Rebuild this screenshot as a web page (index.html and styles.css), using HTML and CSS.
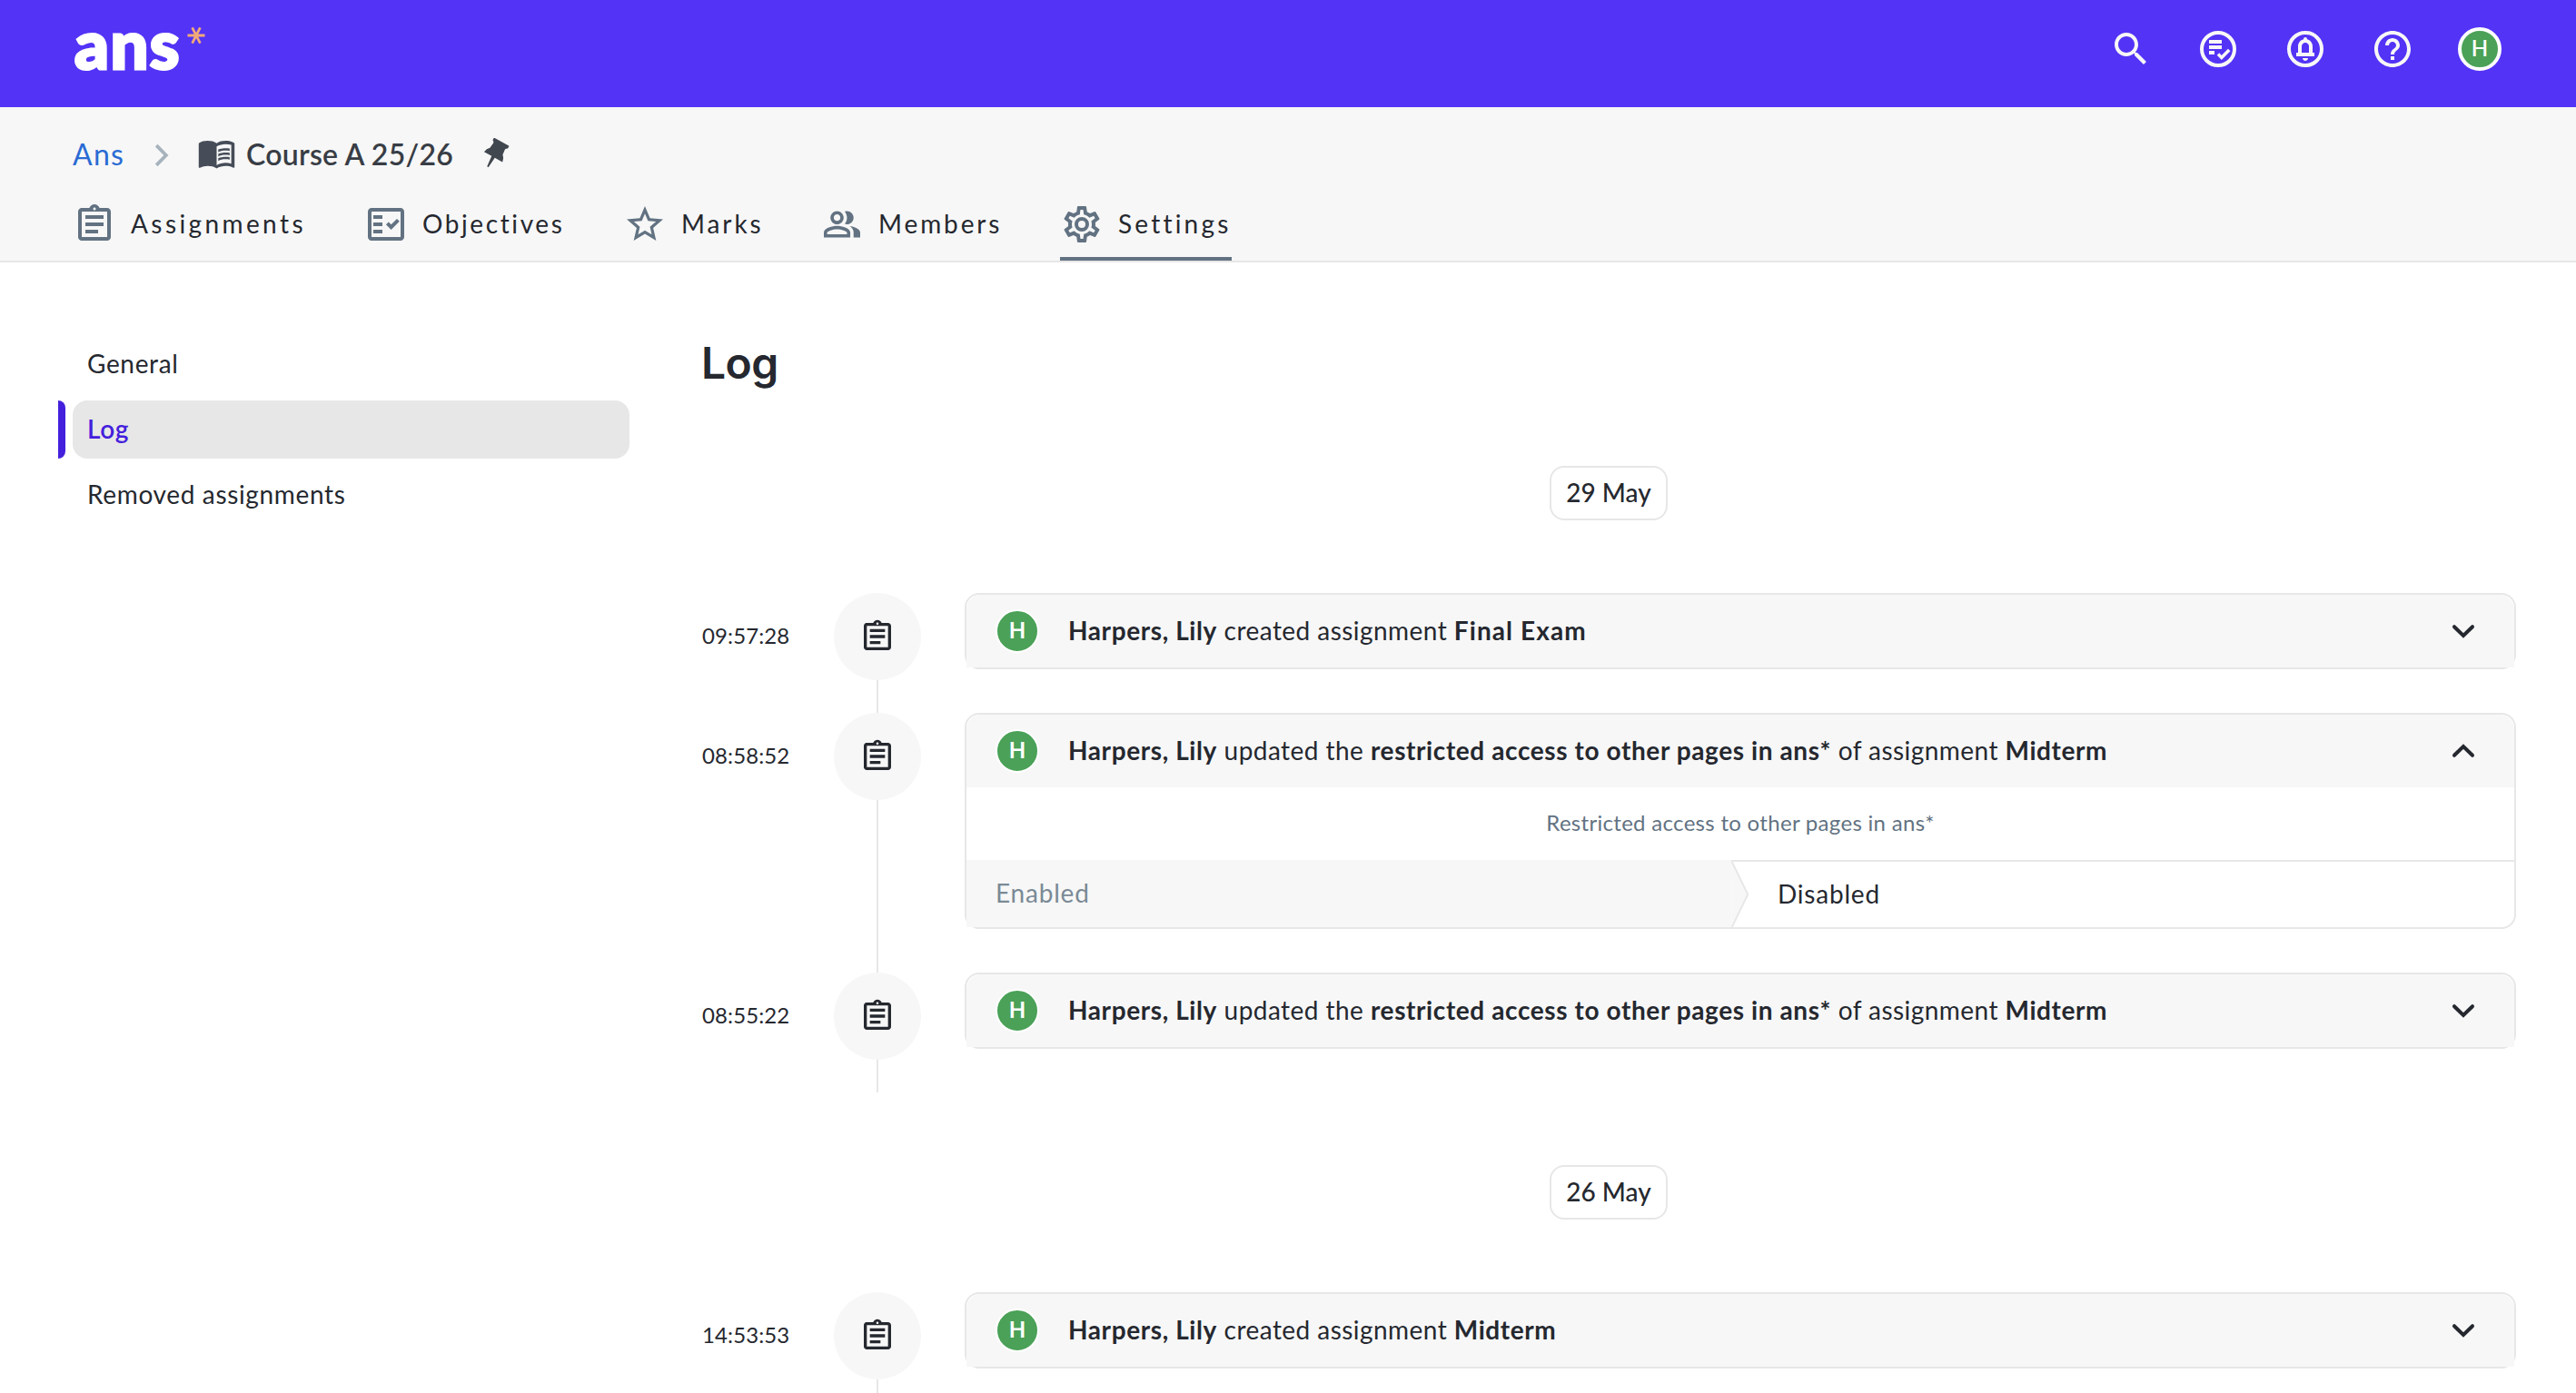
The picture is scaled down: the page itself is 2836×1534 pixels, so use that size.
FILE: index.html
```
<!DOCTYPE html>
<html lang="en">
  <head>
    <meta charset="UTF-8" />
    <meta name="viewport" content="width=device-width, initial-scale=1.0" />
    <title>Log - Course A 25/26</title>
    <link rel="stylesheet" href="styles.css">
  </head>
  <body>
    <svg class="sprite" xmlns="http://www.w3.org/2000/svg">
      <symbol id="i-clipboard" viewBox="0 0 24 24">
        <path d="M7 15h7v2H7zm0-4h10v2H7zm0-4h10v2H7zm12-4h-4.18C14.4 1.84 13.3 1 12 1c-1.3 0-2.4.84-2.82 2H5c-.14 0-.27.01-.4.04-.39.08-.74.28-1.01.55-.18.18-.33.4-.43.64-.1.23-.16.49-.16.77v14c0 .27.06.54.16.78s.25.45.43.64c.27.27.62.47 1.01.55.13.02.26.03.4.03h14c1.1 0 2-.9 2-2V5c0-1.1-.9-2-2-2zm-7-.25c.41 0 .75.34.75.75s-.34.75-.75.75-.75-.34-.75-.75.34-.75.75-.75zM19 19H5V5h14v14z" />
      </symbol>
      <symbol id="i-chevron" viewBox="0 0 24 24">
        <path d="M7 9.6l5 4.9 5-4.9" fill="none" stroke="currentColor" stroke-width="2" stroke-linecap="round" />
      </symbol>
    </svg>

    <header class="topbar">
      <a class="logo" href="#">
        <span class="logo-text">ans</span>
        <svg class="logo-star" viewBox="0 0 20 20"><path d="M.5 10h19M5.6 1.4l8.8 17.2M14.4 1.4L5.6 18.6" /></svg>
      </a>
      <nav class="topbar-actions">
        <svg class="icon" viewBox="0 0 24 24"><path d="M15.5 14h-.79l-.28-.27C15.41 12.59 16 11.11 16 9.5 16 5.91 13.09 3 9.5 3S3 5.91 3 9.5 5.91 16 9.5 16c1.61 0 3.09-.59 4.23-1.57l.27.28v.79l5 4.99L20.49 19l-4.99-5zm-6 0C7.01 14 5 11.99 5 9.5S7.01 5 9.5 5 14 7.01 14 9.5 11.99 14 9.5 14z" /></svg>
        <svg class="icon" viewBox="0 0 24 24"><circle cx="12" cy="12" r="9" fill="none" stroke="currentColor" stroke-width="2" /><path d="M7 7h7v2H7zM7 10h7v2H7zM7 13h3v2H7z" /><path d="M12 14.8l1.9 1.9 4.2-4.2" fill="none" stroke="currentColor" stroke-width="1.8" /></svg>
        <svg class="icon" viewBox="0 0 24 24"><circle cx="12" cy="12" r="9" fill="none" stroke="currentColor" stroke-width="2" /><path fill-rule="evenodd" d="M7 16v-2h1v-3.5c0-1.86 1.28-3.41 3-3.86V6.5a1 1 0 0 1 2 0v.14c1.72.45 3 2 3 3.86V14h1v2zM10 14h4v-3.5c0-1.1-.9-2-2-2s-2 .9-2 2zM10.5 17h3c0 .83-.67 1.5-1.5 1.5s-1.5-.67-1.5-1.5z" /></svg>
        <svg class="icon" viewBox="0 0 24 24"><path d="M11 18h2v-2h-2v2zm1-16C6.48 2 2 6.48 2 12s4.48 10 10 10 10-4.48 10-10S17.52 2 12 2zm0 18c-4.41 0-8-3.59-8-8s3.59-8 8-8 8 3.59 8 8-3.59 8-8 8zm0-14c-2.21 0-4 1.79-4 4h2c0-1.1.9-2 2-2s2 .9 2 2c0 2-3 1.75-3 5h2c0-2.25 3-2.5 3-5 0-2.21-1.79-4-4-4z" /></svg>
        <span class="avatar avatar-top">H</span>
      </nav>
    </header>

    <div class="subheader">
      <div class="breadcrumb">
        <a class="crumb-link" href="#">Ans</a>
        <svg class="crumb-sep" viewBox="0 0 16 26"><path d="M2.2 2.2L12.8 13 2.2 23.8" /></svg>
        <svg class="crumb-book" viewBox="0 0 24 24"><path d="M17.5 4.5c-1.95 0-4.05.4-5.5 1.5-1.45-1.1-3.55-1.5-5.5-1.5S2.45 4.9 1 6v14.65c0 .65.73.45.75.45C3.1 20.45 5.05 20 6.5 20c1.95 0 4.05.4 5.5 1.5 1.35-.85 3.8-1.5 5.5-1.5 1.65 0 3.35.3 4.75 1.05.41.21.75-.19.75-.45V6c-1.49-1.12-3.59-1.5-5.5-1.5zm3.5 14c-1.1-.35-2.3-.5-3.5-.5-1.7 0-4.15.65-5.5 1.5V8c1.35-.85 3.8-1.5 5.5-1.5 1.2 0 2.4.15 3.5.5v11.5z" /><path d="M17.5 10.5c.88 0 1.73.09 2.5.26V9.24c-.79-.15-1.64-.24-2.5-.24-1.7 0-3.24.29-4.5.83v1.66c1.13-.64 2.7-.99 4.5-.99zM13 12.49v1.66c1.13-.64 2.7-.99 4.5-.99.88 0 1.73.09 2.5.26V11.9c-.79-.15-1.64-.24-2.5-.24-1.7 0-3.24.3-4.5.83zM17.5 14.33c-1.7 0-3.24.29-4.5.83v1.66c1.13-.64 2.7-.99 4.5-.99.88 0 1.73.09 2.5.26v-1.52c-.79-.16-1.64-.24-2.5-.24z" /></svg>
        <span class="crumb-current">Course A 25/26</span>
        <svg class="crumb-pin" viewBox="0 0 32 36"><path transform="translate(21.500 5.500) rotate(29)" d="M-9.500-1.500h19V1.500Q7.500 2.500 7.300 4l.7 6.500Q11 13 11.500 17.500H2L.8 30h-1.600L-2 17.500h-9.500Q-11 13-8 10.500L-7.300 4Q-7.500 2.500-9.500 1.500z" /></svg>
      </div>
      <nav class="tabs">
        <a class="tab tab-assignments" href="#">
          <svg class="icon"><use href="#i-clipboard" /></svg>
          <span>Assignments</span>
        </a>
        <a class="tab tab-objectives" href="#">
          <svg class="icon" viewBox="0 0 24 24"><path d="M20 3H4c-1.1 0-2 .9-2 2v14c0 1.1.9 2 2 2h16c1.1 0 2-.9 2-2V5c0-1.1-.9-2-2-2zm0 16H4V5h16v14z" /><path d="M19.41 10.42L17.99 9l-3.17 3.17-1.41-1.42L12 12.16 14.82 15zM5 7h5v2H5zM5 11h5v2H5zM5 15h5v2H5z" /></svg>
          <span>Objectives</span>
        </a>
        <a class="tab" href="#">
          <svg class="icon" viewBox="0 0 24 24"><path d="M22 9.24l-7.19-.62L12 2 9.19 8.63 2 9.24l5.46 4.73L5.82 21 12 17.27 18.18 21l-1.63-7.03L22 9.24zM12 15.4l-3.76 2.27 1-4.28-3.32-2.88 4.38-.38L12 6.1l1.71 4.04 4.38.38-3.32 2.88 1 4.28L12 15.4z" /></svg>
          <span>Marks</span>
        </a>
        <a class="tab" href="#">
          <svg class="icon" viewBox="-1.2 -1.2 26.4 26.4"><path d="M16.67 13.13C18.04 14.06 19 15.32 19 17v3h4v-3c0-2.18-3.57-3.47-6.33-3.87zM15 12c2.21 0 4-1.79 4-4s-1.79-4-4-4c-.47 0-.91.1-1.33.24C14.5 5.27 15 6.58 15 8s-.5 2.73-1.33 3.76c.42.14.86.24 1.33.24zM9 12c2.21 0 4-1.79 4-4s-1.79-4-4-4-4 1.79-4 4 1.79 4 4 4zm0-6c1.1 0 2 .9 2 2s-.9 2-2 2-2-.9-2-2 .9-2 2-2zM9 13c-2.67 0-8 1.34-8 4v3h16v-3c0-2.66-5.33-4-8-4zm6 5H3v-.99C3.2 16.29 6.3 15 9 15s5.8 1.29 6 2v1z" /></svg>
          <span>Members</span>
        </a>
        <a class="tab tab-settings active" href="#">
          <svg class="icon" viewBox="0 0 24 24"><path d="M12,8A4,4 0 0,1 16,12A4,4 0 0,1 12,16A4,4 0 0,1 8,12A4,4 0 0,1 12,8M12,10A2,2 0 0,0 10,12A2,2 0 0,0 12,14A2,2 0 0,0 14,12A2,2 0 0,0 12,10M10,22C9.75,22 9.54,21.82 9.5,21.58L9.13,18.93C8.5,18.68 7.96,18.34 7.44,17.94L4.95,18.95C4.73,19.03 4.46,18.95 4.34,18.73L2.34,15.27C2.21,15.05 2.27,14.78 2.46,14.63L4.57,12.97L4.5,12L4.57,11L2.46,9.37C2.27,9.22 2.21,8.95 2.34,8.73L4.34,5.27C4.46,5.05 4.73,4.96 4.95,5.05L7.44,6.05C7.96,5.66 8.5,5.32 9.13,5.07L9.5,2.42C9.54,2.18 9.75,2 10,2H14C14.25,2 14.46,2.18 14.5,2.42L14.87,5.07C15.5,5.32 16.04,5.66 16.56,6.05L19.05,5.05C19.27,4.96 19.54,5.05 19.66,5.27L21.66,8.73C21.79,8.95 21.73,9.22 21.54,9.37L19.43,11L19.5,12L19.43,13L21.54,14.63C21.73,14.78 21.79,15.05 21.66,15.27L19.66,18.73C19.54,18.95 19.27,19.04 19.05,18.95L16.56,17.95C16.04,18.34 15.5,18.68 14.87,18.93L14.5,21.58C14.46,21.82 14.25,22 14,22H10M11.25,4L10.88,6.61C9.68,6.86 8.62,7.5 7.85,8.39L5.44,7.35L4.69,8.65L6.8,10.2C6.4,11.37 6.4,12.64 6.8,13.8L4.68,15.36L5.43,16.66L7.86,15.62C8.63,16.5 9.68,17.14 10.87,17.38L11.24,20H12.76L13.13,17.39C14.32,17.14 15.37,16.5 16.14,15.62L18.57,16.66L19.32,15.36L17.2,13.81C17.6,12.64 17.6,11.37 17.2,10.2L19.31,8.65L18.56,7.35L16.15,8.39C15.38,7.5 14.32,6.86 13.12,6.62L12.75,4H11.25Z" /></svg>
          <span>Settings</span>
        </a>
      </nav>
    </div>

    <div class="page">
      <aside class="sidebar">
        <a class="side-link" href="#">General</a>
        <a class="side-link active" href="#">Log</a>
        <a class="side-link" href="#">Removed assignments</a>
      </aside>

      <main class="content">
        <h1>Log</h1>

        <div class="date-row"><span class="date">29 May</span></div>

        <div class="entry">
          <time class="time">09:57:28</time>
          <div class="rail">
            <span class="rail-dot"><svg><use href="#i-clipboard" /></svg></span>
          </div>
          <div class="card">
            <div class="card-head">
              <span class="avatar">H</span>
              <p class="card-text"><b>Harpers, Lily</b> created assignment <b class="wide">Final Exam</b></p>
              <svg class="icon"><use href="#i-chevron" /></svg>
            </div>
          </div>
        </div>

        <div class="entry">
          <time class="time">08:58:52</time>
          <div class="rail">
            <span class="rail-dot"><svg><use href="#i-clipboard" /></svg></span>
          </div>
          <div class="card">
            <div class="card-head">
              <span class="avatar">H</span>
              <p class="card-text"><b>Harpers, Lily</b> updated the <b>restricted access to other pages in ans*</b> of assignment <b>Midterm</b></p>
              <svg class="icon up"><use href="#i-chevron" /></svg>
            </div>
            <div class="change-title">Restricted access to other pages in ans*</div>
            <div class="change">
              <div class="change-old">Enabled</div>
              <svg class="change-arrow" viewBox="0 0 20 74"><path class="arrow-fill" d="M0 0l18.5 37L0 74z" /><path class="arrow-line" d="M.5 0l18 37-18 37" /></svg>
              <div class="change-new">Disabled</div>
            </div>
          </div>
        </div>

        <div class="entry">
          <time class="time">08:55:22</time>
          <div class="rail">
            <span class="rail-dot"><svg><use href="#i-clipboard" /></svg></span>
          </div>
          <div class="card">
            <div class="card-head">
              <span class="avatar">H</span>
              <p class="card-text"><b>Harpers, Lily</b> updated the <b>restricted access to other pages in ans*</b> of assignment <b>Midterm</b></p>
              <svg class="icon"><use href="#i-chevron" /></svg>
            </div>
          </div>
        </div>

        <div class="date-row"><span class="date">26 May</span></div>

        <div class="entry">
          <time class="time">14:53:53</time>
          <div class="rail">
            <span class="rail-dot"><svg><use href="#i-clipboard" /></svg></span>
          </div>
          <div class="card">
            <div class="card-head">
              <span class="avatar">H</span>
              <p class="card-text"><b>Harpers, Lily</b> created assignment <b>Midterm</b></p>
              <svg class="icon"><use href="#i-chevron" /></svg>
            </div>
          </div>
        </div>
      </main>
    </div>
  </body>
</html>
```
FILE: styles.css
```
* {
  box-sizing: border-box;
}

body {
  margin: 0;
  font-family: Lato, sans-serif;
  font-size: 28px;
  letter-spacing: 0.45px;
  color: #25282f;
  background: #fff;
}

a {
  color: inherit;
  text-decoration: none;
}

svg {
  display: block;
  fill: currentColor;
  flex: none;
}

.sprite {
  display: none;
}

.icon {
  width: 48px;
  height: 48px;
}

.avatar {
  display: flex;
  align-items: center;
  justify-content: center;
  flex: none;
  width: 48px;
  height: 48px;
  border: 2px solid #fff;
  border-radius: 50%;
  background: #4aa157;
  color: #fff;
  font-size: 24px;
  line-height: 40px;
  padding-bottom: 2px;
  font-weight: 700;
  letter-spacing: 0;
}

/* top bar */
.topbar {
  display: flex;
  align-items: center;
  justify-content: space-between;
  height: 118px;
  padding: 0 82px 10px 80px;
  background: #5333f6;
}

.logo {
  display: flex;
  padding-left: 2px;
  color: #fff;
}

.logo-text {
  height: 80px;
  font-size: 74px;
  line-height: 67px;
  font-weight: 900;
  letter-spacing: 1.5px;
  -webkit-text-stroke: 3px #fff;
}

.logo-star {
  width: 20px;
  height: 20px;
  margin: 15px 0 0 7px;
  fill: none;
  stroke: #f2a978;
  stroke-width: 2.8;
}

.topbar-actions {
  display: flex;
  align-items: center;
  gap: 48px;
  color: #f7f7f7;
}

.avatar-top {
  border-width: 4px;
  font-weight: 600;
}

/* breadcrumb + tabs */
.subheader {
  padding: 0 80px;
  background: #f7f7f7;
  border-bottom: 2px solid #e7e7e7;
}

.breadcrumb {
  display: flex;
  align-items: center;
  height: 105px;
  padding-bottom: 2px;
  font-size: 32px;
}

.crumb-link {
  width: 90px;
  color: #2a6bd4;
  letter-spacing: 1.3px;
}

.crumb-sep {
  width: 16px;
  height: 26px;
  margin-top: 3px;
  fill: none;
  stroke: #a6b3bd;
  stroke-width: 3.8;
}

.crumb-book {
  width: 43px;
  height: 43px;
  margin: 0 11px 2px 31px;
  color: #464d59;
}

.crumb-current {
  width: 259px;
  color: #383d45;
  font-weight: 600;
  letter-spacing: 0.25px;
}

.crumb-pin {
  width: 32px;
  height: 36px;
  color: #41474f;
}

.tabs {
  display: grid;
  grid-template-columns: 257px 221px 153px 200px 189px;
  gap: 64px;
}

.tab {
  display: flex;
  gap: 16px;
  height: 64px;
  line-height: 46px;
  letter-spacing: 2.9px;
}

.tab-assignments {
  letter-spacing: 3.4px;
}

.tab-objectives {
  letter-spacing: 2.6px;
}

.tab-settings {
  letter-spacing: 3.2px;
}

.tab .icon {
  color: #627282;
}

.tab.active {
  border-bottom: 4px solid #627282;
}

/* page */
.page {
  display: grid;
  grid-template-columns: 613px 1998px;
  column-gap: 79px;
  height: 1245px;
  padding: 80px 66px 0 80px;
  overflow: hidden;
}

.sidebar {
  display: flex;
  flex-direction: column;
  gap: 8px;
}

.side-link {
  position: relative;
  height: 64px;
  padding: 0 16px;
  line-height: 62px;
  letter-spacing: 0.65px;
  border-radius: 16px;
}

.side-link.active {
  background: #e7e7e7;
  color: #4420dc;
  font-weight: 600;
}

.side-link.active::before {
  content: '';
  position: absolute;
  top: 0;
  left: -16px;
  width: 8px;
  height: 64px;
  border-radius: 0 8px 8px 0;
  background: #4420dc;
}

h1 {
  height: 64px;
  margin: 0 0 80px;
  font-family: Inter, sans-serif;
  font-size: 48px;
  line-height: 62px;
  font-weight: 600;
  letter-spacing: -0.6px;
}

.date-row {
  display: flex;
  justify-content: center;
  margin-bottom: 80px;
}

.date {
  width: 130px;
  height: 60px;
  border: 2px solid #e7e7e7;
  border-radius: 16px;
  line-height: 54px;
  font-weight: 500;
  letter-spacing: 0;
  text-align: center;
}

.entry {
  display: grid;
  grid-template-columns: 146px 96px 1fr;
}

.entry + .date-row {
  margin-top: 80px;
}

.time {
  padding-left: 1px;
  font-size: 24px;
  line-height: 94px;
  letter-spacing: 0.1px;
}

.rail {
  display: flex;
  flex-direction: column;
  align-items: center;
}

.rail::after {
  content: '';
  flex: 1;
  width: 2px;
  background: #e7e7e7;
}

.rail-dot {
  display: flex;
  align-items: center;
  justify-content: center;
  width: 96px;
  height: 96px;
  border-radius: 50%;
  background: #f7f7f7;
}

.rail-dot svg {
  width: 40px;
  height: 40px;
}

.card {
  margin: 0 0 48px 48px;
  border: 2px solid #e7e7e7;
  border-radius: 16px;
}

.card-head {
  display: flex;
  align-items: center;
  height: 80px;
  padding: 0 32px;
  border-radius: 16px 16px 0 0;
  background: #f7f7f7;
}

.card-text {
  flex: 1;
  margin: 0 0 2px 32px;
}

.card-text b {
  letter-spacing: 0.6px;
}

.card-text .wide {
  letter-spacing: 1.1px;
}

.up {
  transform: scaleY(-1);
}

.change-title {
  height: 80px;
  line-height: 78px;
  font-size: 24px;
  letter-spacing: 0.3px;
  text-align: center;
  color: #627282;
}

.change {
  display: grid;
  grid-template-columns: 842px 20px 1fr;
  height: 74px;
}

.change-old {
  padding-left: 32px;
  line-height: 72px;
  background: #f7f7f7;
  color: #7a8a96;
  letter-spacing: 0.8px;
}

.change-arrow {
  width: 20px;
  height: 74px;
  border-top: 2px solid #e7e7e7;
}

.arrow-fill {
  fill: #f7f7f7;
}

.arrow-line {
  fill: none;
  stroke: #e7e7e7;
  stroke-width: 2;
}

.change-new {
  padding-left: 31px;
  line-height: 70px;
  border-top: 2px solid #e7e7e7;
  letter-spacing: 0.8px;
}
```
